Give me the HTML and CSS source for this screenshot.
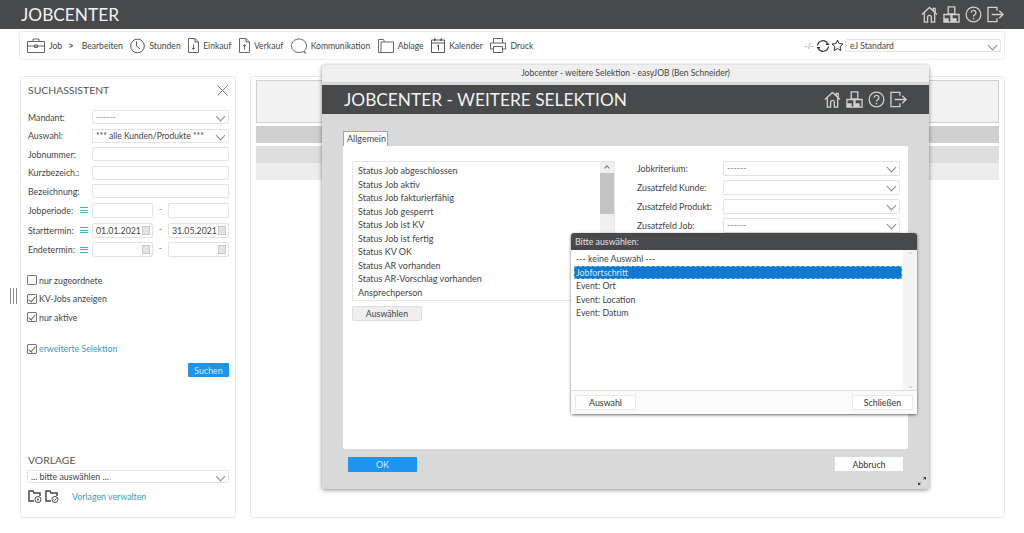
FILE: index.html
```html
<!DOCTYPE html>
<html lang="de">
<head>
    <meta charset="UTF-8">
    <title>Jobcenter</title>
    <link rel="stylesheet" href="styles.css">
</head>
<body>
    <svg class="defs" width="0" height="0">
        <symbol id="i-home" viewBox="0 0 18 18">
            <path d="M1 9 9 1.500 17 9M13 5V2.500h2v4.500M3.500 7.500V17H7v-5a2 2 0 0 1 4 0v5h3.500V7.500" fill="none" stroke="currentColor" stroke-width="1.400"/>
        </symbol>
        <symbol id="i-boxes" viewBox="0 0 18 18">
            <path d="M5.500 1h7v7.500h-7zM1 9h7.500v8H1zM9.500 9H17v8H9.500z" fill="none" stroke="currentColor" stroke-width="1.400"/>
            <path d="M1 13h5v4H1zM9.500 13h5v4h-5z" fill="currentColor"/>
        </symbol>
        <symbol id="i-help" viewBox="0 0 18 18">
            <circle cx="9" cy="9" r="7.800" fill="none" stroke="currentColor" stroke-width="1.300"/>
            <path d="M6.500 7a2.500 2.500 0 1 1 3.600 2.300C9.300 9.700 9 10.200 9 11" fill="none" stroke="currentColor" stroke-width="1.400"/>
            <circle cx="9" cy="13.300" r=".9" fill="currentColor"/>
        </symbol>
        <symbol id="i-logout" viewBox="0 0 18 18">
            <path d="M10.500 5V1.500H1v15h9.500V13M5 9h12M13 5l4 4-4 4" fill="none" stroke="currentColor" stroke-width="1.400"/>
        </symbol>
    </svg>

    <header class="topbar">
        <span class="app-title">JOBCENTER</span>
        <div class="head-icons">
            <svg><use href="#i-home"/></svg>
            <svg><use href="#i-boxes"/></svg>
            <svg><use href="#i-help"/></svg>
            <svg><use href="#i-logout"/></svg>
        </div>
    </header>

    <nav class="toolbar">
        <div class="tool">
            <svg class="ti" width="18" height="15" viewBox="0 0 18 15"><path d="M.5 3.500h17v11H.5zM.5 8h17M6 3.500V1h6v2.500M7.500 7h3v2.500h-3z" fill="none" stroke="#555" stroke-width=".9"/></svg>
            <span>Job</span>
        </div>
        <div class="tool crumb"><span class="crumb-arrow">&gt;</span><span>Bearbeiten</span></div>
        <div class="tool">
            <svg class="ti" width="15" height="16" viewBox="0 0 15 16"><circle cx="7.500" cy="8" r="6.800" fill="none" stroke="#555"/><path d="M6.500 3.500V8l3.500 3" fill="none" stroke="#555"/></svg>
            <span>Stunden</span>
        </div>
        <div class="tool">
            <svg class="ti" width="11" height="15" viewBox="0 0 11 15"><path d="M.5.500h6.500l3.500 3.500v10.500H.5zM7 .5V4h3.500M5.500 6.500v5M3.800 9.800l1.700 1.700 1.700-1.700" fill="none" stroke="#555" stroke-width=".9"/></svg>
            <span>Einkauf</span>
        </div>
        <div class="tool">
            <svg class="ti" width="11" height="15" viewBox="0 0 11 15"><path d="M.5.500h6.500l3.500 3.500v10.500H.5zM7 .5V4h3.500M5.500 11.500v-5M3.800 8.200l1.700-1.700 1.700 1.700" fill="none" stroke="#555" stroke-width=".9"/></svg>
            <span>Verkauf</span>
        </div>
        <div class="tool">
            <svg class="ti" width="16" height="16" viewBox="0 0 16 16"><path d="M12 13.500c-1 .7-2.500 1-4 1-4.200 0-7.500-2.900-7.500-6.700S3.800 1 8 1s7.500 3 7.500 6.800c0 1.900-.8 3.500-2 4.700l.8 3z" fill="none" stroke="#555" stroke-width=".9"/></svg>
            <span>Kommunikation</span>
        </div>
        <div class="tool">
            <svg class="ti" width="16" height="14" viewBox="0 0 16 14"><path d="M.5 13.500V.5h5l1 2.500h9v10.500zM3 13.500V3h3.500" fill="none" stroke="#555" stroke-width=".9"/></svg>
            <span>Ablage</span>
        </div>
        <div class="tool">
            <svg class="ti" width="14" height="15" viewBox="0 0 14 15"><path d="M.5 2h13v12.500H.5zM.5 5h13" fill="none" stroke="#444" stroke-width=".9"/><path d="M3 .5h1.500V3H3zM9.500.5H11V3H9.500z" fill="#444"/><path d="M6 8l1.500-1v5.500" fill="none" stroke="#444" stroke-width=".9"/></svg>
            <span>Kalender</span>
        </div>
        <div class="tool">
            <svg class="ti" width="16" height="15" viewBox="0 0 16 15"><path d="M3.500 5V.5h9V5M3.500 11H.5V5h15v6h-3M3.500 8.500h9v6h-9z" fill="none" stroke="#555" stroke-width=".9"/></svg>
            <span>Druck</span>
        </div>

        <div class="tool-right">
            <span class="count">-/-</span>
            <svg width="14" height="14" viewBox="0 0 14 14"><path d="M1.500 6.500A5.500 5.500 0 0 1 11 3.500M12.500 7.500A5.500 5.500 0 0 1 3 10.500" fill="none" stroke="#333" stroke-width="1.200"/><path d="M13.500 6H9.500L11.500 3zM.5 8h4l-2 3z" fill="#333"/></svg>
            <svg width="13" height="13" viewBox="0 0 13 13"><path d="M6.500 1l1.600 3.600 3.900.4-2.900 2.600.8 3.900-3.400-2-3.400 2 .8-3.900L1 5l3.900-.4z" fill="none" stroke="#333"/></svg>
            <div class="sel view-sel">eJ Standard</div>
        </div>
    </nav>

    <main class="main">
        <aside class="search-card">
            <div class="card-head">
                <h2>SUCHASSISTENT</h2>
                <svg width="11" height="11" viewBox="0 0 11 11"><path d="M.5.5l10 10M10.500.5l-10 10" stroke="#777" fill="none"/></svg>
            </div>

            <div class="form">
                <label>Mandant:</label>
                <div class="sel dashes">------</div>
                <label>Auswahl:</label>
                <div class="sel stars">*** alle Kunden/Produkte ***</div>
                <label>Jobnummer:</label>
                <div class="inp"></div>
                <label>Kurzbezeich.:</label>
                <div class="inp"></div>
                <label>Bezeichnung:</label>
                <div class="inp"></div>

                <label class="lab-menu">Jobperiode: <span class="burger"></span></label>
                <div class="dates">
                    <div class="inp"></div><span>-</span><div class="inp"></div>
                </div>
                <label class="lab-menu">Starttermin: <span class="burger"></span></label>
                <div class="dates">
                    <div class="inp date">01.01.2021<i class="cal"></i></div><span>-</span><div class="inp date">31.05.2021<i class="cal"></i></div>
                </div>
                <label class="lab-menu">Endetermin: <span class="burger"></span></label>
                <div class="dates">
                    <div class="inp date"><i class="cal"></i></div><span>-</span><div class="inp date"><i class="cal"></i></div>
                </div>
            </div>

            <div class="checks">
                <div class="check"><i class="box"></i>nur zugeordnete</div>
                <div class="check"><i class="box on"></i>KV-Jobs anzeigen</div>
                <div class="check"><i class="box on"></i>nur aktive</div>
                <div class="check more"><i class="box on"></i>erweiterte Selektion</div>
            </div>

            <div class="search-row"><button class="btn-blue search-btn">Suchen</button></div>

            <div class="template">
                <h2>VORLAGE</h2>
                <div class="sel">... bitte auswählen ...</div>
                <div class="template-row">
                    <svg width="14" height="14" viewBox="0 0 14 14"><path d="M6 12H1V2h4l1 2h6v3" fill="none" stroke="#444" stroke-width="1.500"/><circle cx="10" cy="10.500" r="3" fill="#fff" stroke="#444"/><circle cx="10" cy="10.500" r="1" fill="#444"/></svg>
                    <svg width="14" height="14" viewBox="0 0 14 14"><path d="M6 12H1V2h4l1 2h6v3" fill="none" stroke="#444" stroke-width="1.500"/><circle cx="10" cy="10.500" r="3" fill="#fff" stroke="#444"/><path d="M8.500 10.500l1 1 2-2" fill="none" stroke="#444"/></svg>
                    <a class="manage">Vorlagen verwalten</a>
                </div>
            </div>
        </aside>

        <section class="result-card">
            <div class="ph ph-big"></div>
            <div class="ph ph-dark"></div>
            <div class="ph ph-mid"></div>
            <div class="ph ph-light"></div>
        </section>
    </main>

    <div class="grip"></div>

    <div class="dialog">
        <div class="dialog-title">Jobcenter - weitere Selektion - easyJOB (Ben Schneider)</div>
        <div class="dialog-head">
            <span class="dialog-name">JOBCENTER - WEITERE SELEKTION</span>
            <div class="head-icons">
                <svg><use href="#i-home"/></svg>
                <svg><use href="#i-boxes"/></svg>
                <svg><use href="#i-help"/></svg>
                <svg><use href="#i-logout"/></svg>
            </div>
        </div>
        <div class="dialog-body">
            <div class="tab">Allgemein</div>
            <div class="panel">
                <div class="panel-left">
                    <div class="listbox">
                        <ul>
                            <li>Status Job abgeschlossen</li>
                            <li>Status Job aktiv</li>
                            <li>Status Job fakturierfähig</li>
                            <li>Status Job gesperrt</li>
                            <li>Status Job ist KV</li>
                            <li>Status Job ist fertig</li>
                            <li>Status KV OK</li>
                            <li>Status AR vorhanden</li>
                            <li>Status AR-Vorschlag vorhanden</li>
                            <li>Ansprechperson</li>
                        </ul>
                        <div class="scroll"><div class="thumb"></div></div>
                    </div>
                    <button class="btn-grey">Auswählen</button>
                </div>
                <div class="panel-right">
                    <label>Jobkriterium:</label><div class="sel dashes">------</div>
                    <label>Zusatzfeld Kunde:</label><div class="sel"></div>
                    <label>Zusatzfeld Produkt:</label><div class="sel"></div>
                    <label>Zusatzfeld Job:</label><div class="sel dashes">------</div>
                </div>
            </div>
            <div class="dialog-foot">
                <button class="btn-blue ok-btn">OK</button>
                <button class="btn-white cancel-btn">Abbruch</button>
            </div>
        </div>
        <svg class="resizer" width="10" height="10" viewBox="0 0 10 10"><path d="M6 1h3v3zM1 6v3h3z" fill="#444"/><path d="M8 2 6.500 3.500M2 8l1.500-1.500" stroke="#444"/></svg>
    </div>

    <div class="popup">
        <div class="popup-head">Bitte auswählen:</div>
        <div class="popup-list">
            <ul>
                <li>--- keine Auswahl ---</li>
                <li class="picked">Jobfortschritt</li>
                <li>Event: Ort</li>
                <li>Event: Location</li>
                <li>Event: Datum</li>
            </ul>
            <div class="popup-scroll"><span>&#8963;</span><span class="down">&#8964;</span></div>
        </div>
        <div class="popup-foot">
            <button class="btn-white">Auswahl</button>
            <button class="btn-white">Schließen</button>
        </div>
    </div>
</body>
</html>
```

FILE: styles.css
```css
* {
    box-sizing: border-box;
}

html, body {
    height: 533px;
}

body {
    margin: 0;
    overflow: hidden;
    background: #fff;
    color: #444;
    font-family: Lato, "Open Sans", sans-serif;
    font-size: 8.800px;
    position: relative;
}

.defs {
    position: absolute;
}

ul {
    list-style: none;
    margin: 0;
    padding: 0;
}

button {
    font-family: inherit;
    font-size: 8.800px;
    border: 0;
    padding: 0;
}

.topbar {
    height: 29px;
    background: #47494b;
    color: #f2f2f2;
    display: flex;
    align-items: center;
    justify-content: space-between;
    padding: 0 20px 0 21px;
}

.app-title {
    font-size: 17.300px;
}

.head-icons {
    display: flex;
    gap: 5px;
    color: #d0d0d0;
}

.head-icons svg {
    width: 17px;
    height: 17px;
}

.toolbar {
    margin: 2px 19px 0 19px;
    height: 29px;
    border: 1px solid #ececec;
    border-radius: 3px;
    display: flex;
    align-items: center;
    padding-left: 7px;
    gap: 7.500px;
    font-size: 8.600px;
}

.tool {
    display: flex;
    align-items: center;
    gap: 4px;
}

.crumb {
    gap: 8px;
    margin-left: -1px;
}

.crumb-arrow {
    font-weight: 700;
}

.tool-right {
    margin-left: auto;
    display: flex;
    align-items: center;
    gap: 1px;
    padding-right: 3px;
}

.count {
    color: #777;
    font-size: 8px;
    margin-right: 1px;
}

.sel, .inp {
    background: #fff;
    border: 1px solid #e2e2e2;
    border-radius: 2px;
    height: 14px;
    line-height: 12px;
    padding-left: 3px;
    position: relative;
    white-space: nowrap;
}

.sel::after {
    content: "";
    position: absolute;
    right: 4px;
    top: 2px;
    width: 6px;
    height: 6px;
    border-right: 1px solid #888;
    border-bottom: 1px solid #888;
    transform: rotate(45deg);
}

.dashes {
    color: #888;
}

.stars {
    font-size: 8.500px;
}

.view-sel {
    width: 156px;
    height: 13px;
    padding-left: 4px;
}

.main {
    display: flex;
    gap: 14px;
    margin: 16px 19px 0 20px;
    height: 442px;
}

.search-card, .result-card {
    border: 1px solid #e8e8e8;
    border-radius: 3px;
    background: #fff;
}

.search-card {
    width: 216px;
    padding: 0 6px 0 7px;
    display: flex;
    flex-direction: column;
}

.card-head {
    display: flex;
    align-items: center;
    justify-content: space-between;
    height: 26px;
    padding-right: 1px;
}

h2 {
    margin: 0;
    font-size: 10.400px;
    font-weight: 400;
    color: #555;
}

.form {
    display: grid;
    grid-template-columns: 64px 137px;
    row-gap: 4.600px;
    margin-top: 7px;
    align-items: center;
}

.lab-menu {
    display: flex;
    align-items: center;
    justify-content: space-between;
    padding-right: 4px;
}

.burger {
    width: 8px;
    height: 6px;
    border-top: 1px solid #4cb0cc;
    border-bottom: 1px solid #4cb0cc;
    position: relative;
}

.burger::after {
    content: "";
    position: absolute;
    left: 0;
    right: 0;
    top: 1.500px;
    border-top: 1px solid #4cb0cc;
}

.dates {
    display: grid;
    grid-template-columns: 61px 15px 61px;
    text-align: center;
    color: #777;
}

.dates .inp {
    height: 15px;
    color: #444;
    text-align: left;
}

.date {
    line-height: 13px;
}

.cal {
    position: absolute;
    right: 2px;
    top: 2px;
    width: 8px;
    height: 9px;
    background: #e4e4e4;
    border: 1px solid #c8c8c8;
}

.checks {
    margin-top: 14px;
}

.check {
    display: flex;
    align-items: center;
    gap: 2px;
    height: 18.500px;
    margin-left: -1px;
}

.box {
    width: 10px;
    height: 10px;
    border: 1px solid #777;
    border-radius: 1px;
    position: relative;
}

.box.on::after {
    content: "";
    position: absolute;
    left: 2px;
    top: 0;
    width: 3px;
    height: 6px;
    border-right: 1px solid #666;
    border-bottom: 1px solid #666;
    transform: rotate(40deg);
}

.more {
    margin-top: 13px;
    color: #3a9cc0;
}

.search-row {
    display: flex;
    justify-content: flex-end;
    margin-top: 5px;
}

.btn-blue {
    background: #1b95f0;
    color: #d8ecfa;
    border-radius: 1px;
}

.search-btn {
    width: 41px;
    height: 14px;
}

.template {
    margin-top: auto;
    padding-bottom: 14px;
}

.template h2 {
    margin-bottom: 4px;
}

.template .sel {
    height: 13px;
    margin-left: -1px;
}

.template-row {
    display: flex;
    align-items: center;
    gap: 3px;
    margin-top: 6px;
}

.manage {
    color: #3a9cc0;
    margin-left: 10px;
}

.result-card {
    flex: 1;
    padding: 3px 5px;
}

.ph {
    width: 100%;
}

.ph-big {
    height: 43px;
    background: #f2f2f2;
    border: 1px solid #cfcfcf;
    margin-bottom: 3px;
}

.ph-dark {
    height: 17px;
    background: #cfcfcf;
    margin-bottom: 3px;
}

.ph-mid {
    height: 17px;
    background: #dedede;
}

.ph-light {
    height: 17px;
    background: #ececec;
}

.grip {
    position: absolute;
    left: 10px;
    top: 288px;
    width: 9px;
    height: 16px;
    background: repeating-linear-gradient(90deg, #888 0, #888 1px, #fff 1px, #fff 3px);
}

.dialog {
    position: absolute;
    left: 322px;
    top: 65px;
    width: 607px;
    height: 424px;
    background: #d9d9d9;
    border-radius: 3px;
    box-shadow: 0 1px 4px rgba(0, 0, 0, .45);
    display: flex;
    flex-direction: column;
}

.dialog-title {
    height: 20px;
    padding-bottom: 3px;
    background: linear-gradient(#efefef 17px, #d9d9d9 17px);
    text-align: center;
    line-height: 17px;
    font-size: 8.500px;
    color: #444;
    border-radius: 3px 3px 0 0;
}

.dialog-head {
    height: 29px;
    background: #47494b;
    color: #f2f2f2;
    display: flex;
    align-items: center;
    justify-content: space-between;
    padding: 0 22px;
}

.dialog-name {
    font-size: 17.300px;
}

.dialog-body {
    flex: 1;
    padding: 17px 21px 0 21px;
    display: flex;
    flex-direction: column;
}

.tab {
    width: 45px;
    height: 15px;
    background: #fff;
    border: 1px solid #6fb4d8;
    border-bottom: 0;
    line-height: 13px;
    padding-left: 3px;
    font-size: 9px;
}

.panel {
    height: 303px;
    background: #fff;
    border-radius: 0 2px 2px 2px;
    padding: 15px 8px 0 9px;
    display: flex;
    gap: 22px;
}

.panel-left {
    width: 263px;
}

.listbox {
    height: 140px;
    border: 1px solid #e6e6e6;
    display: flex;
    justify-content: space-between;
}

.listbox ul {
    padding: 2px 0 0 5px;
    font-size: 9px;
    line-height: 13.550px;
}

.scroll {
    width: 14px;
    height: 100%;
    background: #f0f0f0;
    padding-top: 11px;
    position: relative;
}

.scroll::before {
    content: "";
    position: absolute;
    left: 5px;
    top: 4px;
    width: 3px;
    height: 3px;
    border-left: 1px solid #777;
    border-top: 1px solid #777;
    transform: rotate(45deg);
}

.thumb {
    height: 41px;
    background: #c4c4c4;
}

.btn-grey {
    width: 70px;
    height: 15px;
    margin-top: 5px;
    background: #eee;
    border: 1px solid #ddd;
    border-radius: 2px;
    color: #444;
}

.panel-right {
    flex: 1;
    display: grid;
    grid-template-columns: 86px 177px;
    grid-auto-rows: 15px;
    row-gap: 4px;
    align-items: center;
}

.panel-right .sel {
    height: 15px;
}

.dialog-foot {
    display: flex;
    justify-content: space-between;
    padding: 8px 5px 0 5px;
}

.ok-btn {
    width: 69px;
    height: 15px;
}

.btn-white {
    background: #fff;
    color: #333;
    border-radius: 1px;
}

.cancel-btn {
    width: 68px;
    height: 14px;
}

.resizer {
    position: absolute;
    right: 2px;
    bottom: 3px;
}

.popup {
    position: absolute;
    left: 571px;
    top: 233px;
    width: 346px;
    height: 181px;
    background: #fff;
    border-radius: 3px;
    box-shadow: 0 1px 3px rgba(0, 0, 0, .6);
    display: flex;
    flex-direction: column;
}

.popup-head {
    height: 17px;
    line-height: 17px;
    background: #47494b;
    color: #e4e4e4;
    padding-left: 4px;
    border-radius: 3px 3px 0 0;
}

.popup-list {
    height: 141px;
    display: flex;
    justify-content: space-between;
    border-bottom: 1px solid #ddd;
}

.popup-list ul {
    flex: 1;
    padding: 2px 0 0 3px;
    line-height: 13.600px;
}

.popup-list li {
    padding-left: 2px;
    margin-right: 1px;
}

.picked {
    background: #0f78d0;
    color: #d8ecfa;
    outline: 1px dashed #7ab8ea;
    outline-offset: -1px;
}

.popup-scroll {
    width: 14px;
    background: #f4f4f4;
    color: #bbb;
    display: flex;
    flex-direction: column;
    justify-content: space-between;
    align-items: center;
    font-size: 8px;
    line-height: 10px;
}

.popup-foot {
    flex: 1;
    display: flex;
    justify-content: space-between;
    align-items: center;
    padding: 0 4px;
    background: #fafafa;
}

.popup-foot .btn-white {
    width: 61px;
    height: 15px;
    border: 1px solid #e8e8e8;
}
```
